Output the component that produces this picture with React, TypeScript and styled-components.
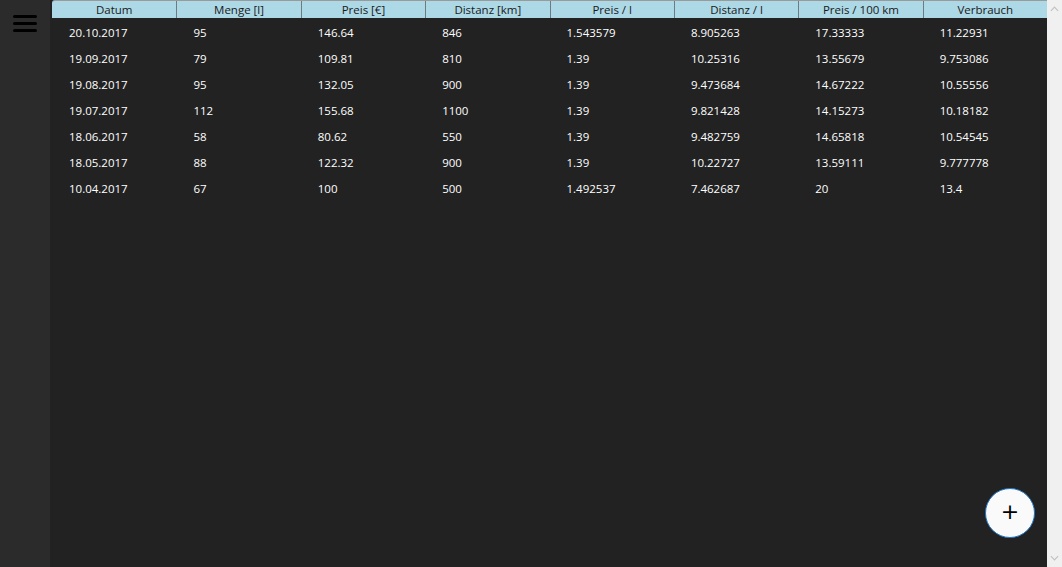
import { FC } from 'react';
import styled, { createGlobalStyle } from 'styled-components';

const GlobalStyle = createGlobalStyle`
    html, body {
        margin: 0;
        padding: 0;
        height: 100%;
        overflow: hidden;
        background: #222222;
    }
    #root {
        height: 100%;
    }
`

const columns = ['Datum', 'Menge [l]', 'Preis [€]', 'Distanz [km]', 'Preis / l', 'Distanz / l', 'Preis / 100 km', 'Verbrauch'];

const rows: string[][] = [
    ['20.10.2017', '95', '146.64', '846', '1.543579', '8.905263', '17.33333', '11.22931'],
    ['19.09.2017', '79', '109.81', '810', '1.39', '10.25316', '13.55679', '9.753086'],
    ['19.08.2017', '95', '132.05', '900', '1.39', '9.473684', '14.67222', '10.55556'],
    ['19.07.2017', '112', '155.68', '1100', '1.39', '9.821428', '14.15273', '10.18182'],
    ['18.06.2017', '58', '80.62', '550', '1.39', '9.482759', '14.65818', '10.54545'],
    ['18.05.2017', '88', '122.32', '900', '1.39', '10.22727', '13.59111', '9.777778'],
    ['10.04.2017', '67', '100', '500', '1.492537', '7.462687', '20', '13.4'],
];

const App: FC = () => {
    return (
        <>
            <GlobalStyle />
            <Window>
                <Sidebar>
                    <Burger>
                        <span />
                        <span />
                        <span />
                    </Burger>
                </Sidebar>
                <Content>
                    <Table>
                        <HeaderRow>
                            {columns.map((c, i) => (
                                <HeaderCell key={c} first={i === 0}>{c}</HeaderCell>
                            ))}
                        </HeaderRow>
                        <Body>
                            {rows.map((r) => (
                                <Row key={r[0]}>
                                    {r.map((v, i) => (
                                        <Cell key={i}>{v}</Cell>
                                    ))}
                                </Row>
                            ))}
                        </Body>
                    </Table>
                    <AddButton>+</AddButton>
                </Content>
                <ScrollBar>
                    <Arrow viewBox="0 0 10 6">
                        <path d="M1 5 L5 1 L9 5" />
                    </Arrow>
                    <Arrow viewBox="0 0 10 6">
                        <path d="M1 1 L5 5 L9 1" />
                    </Arrow>
                </ScrollBar>
            </Window>
        </>
    );
}

const Window = styled.div`
    display: flex;
    width: 100%;
    height: 100vh;
    font-family: "Open Sans", "Noto Sans", sans-serif;
    font-size: 11.5px;
`

const Sidebar = styled.div`
    width: 50px;
    flex-shrink: 0;
    background: #2b2b2b;
    display: flex;
    flex-direction: column;
    align-items: flex-start;
    padding: 15px 0 0 13px;
    box-sizing: border-box;
`

const Burger = styled.div`
    display: flex;
    flex-direction: column;
    gap: 4px;

    span {
        display: block;
        width: 24px;
        height: 3px;
        border-radius: 2px;
        background: #000;
    }
`

const Content = styled.div`
    position: relative;
    flex: 1;
    background: #222222;
    padding-left: 2px;
`

const Table = styled.div`
    display: flex;
    flex-direction: column;
`

const HeaderRow = styled.div`
    display: grid;
    grid-template-columns: repeat(8, 1fr);
    height: 18px;
    background: #add8e6;
    border-top: 1px solid #9a9a9a;
    box-sizing: border-box;
    border-top-left-radius: 3px;
`

const HeaderCell = styled.div<{ first?: boolean }>`
    display: flex;
    align-items: center;
    justify-content: center;
    color: #1a1a1a;
    font-size: 11.5px;
    line-height: 1;
    border-left: ${p => p.first ? 'none' : '1px solid #6e7b80'};
    border-top-left-radius: ${p => p.first ? '3px' : '0'};
`

const Body = styled.div`
    display: flex;
    flex-direction: column;
    padding-top: 1px;
`

const Row = styled.div`
    display: grid;
    grid-template-columns: repeat(8, 1fr);
    height: 26px;
    align-items: center;
`

const Cell = styled.div`
    color: #ffffff;
    padding-left: 17px;
    white-space: nowrap;
`

const AddButton = styled.button`
    position: absolute;
    right: 12px;
    bottom: 29px;
    width: 50px;
    height: 50px;
    border-radius: 50%;
    border: 1px solid #1d75c9;
    background: #fafafa;
    color: #000;
    font-family: "DejaVu Sans", sans-serif;
    font-size: 22px;
    line-height: 1;
    padding: 0 0 3px 0;
    display: flex;
    align-items: center;
    justify-content: center;
    cursor: pointer;
`

const ScrollBar = styled.div`
    width: 15px;
    flex-shrink: 0;
    background: #f0f0f0;
    display: flex;
    flex-direction: column;
    justify-content: space-between;
    align-items: center;
    padding: 6px 0;
    box-sizing: border-box;
`

const Arrow = styled.svg`
    width: 9px;
    height: 6px;
    fill: none;
    stroke: #c2c2c2;
    stroke-width: 1.3;
`

export default App;
